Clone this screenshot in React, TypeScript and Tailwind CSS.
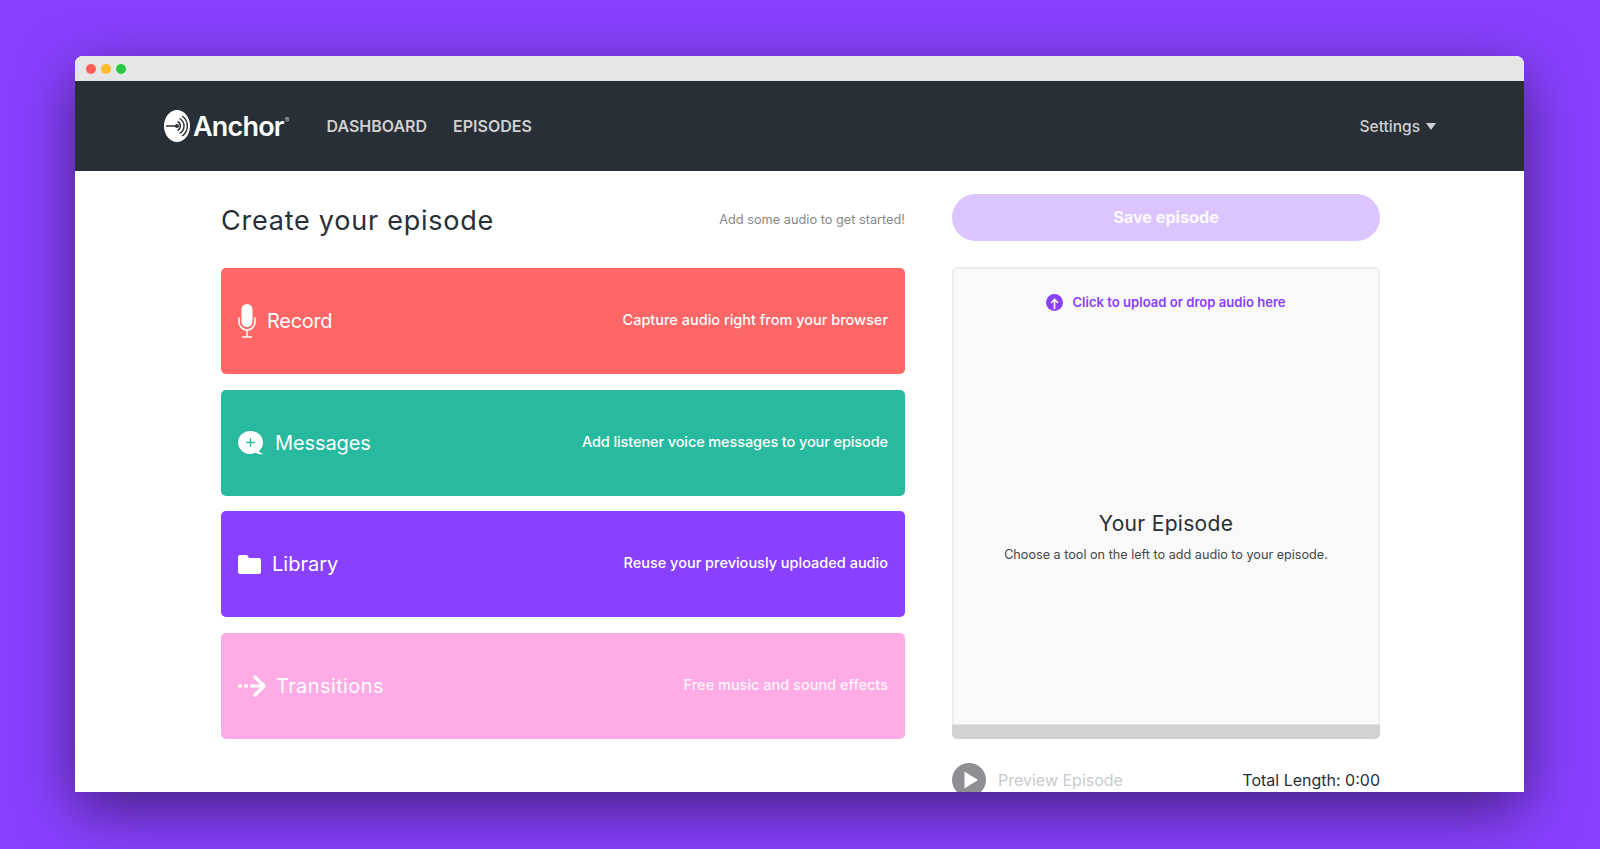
import { ReactNode } from 'react';

const body = "font-['Inter',sans-serif]";

function MicIcon() {
  return (
    <svg width="18" height="34" viewBox="0 0 18 34" fill="none">
      <rect x="3.5" y="0" width="11" height="23" rx="5.5" fill="white" />
      <path d="M1 14v4a8 8 0 0 0 16 0v-4" stroke="white" strokeWidth="1.6" strokeLinecap="round" />
      <path d="M9 26v7M4 33h10" stroke="white" strokeWidth="1.6" />
    </svg>
  );
}

function BubbleIcon() {
  return (
    <svg className="shrink-0" width="26" height="24" viewBox="0 0 26 24">
      <ellipse cx="12.5" cy="11.5" rx="12.5" ry="11.5" fill="white" />
      <path d="M20 19c.8 1.700 2.500 3.300 5.500 4-3.500 .6-6.500 0-8.500-1.500z" fill="white" />
      <path d="M12.500 7.250v8.500M8.250 11.500h8.500" stroke="#27BA9E" strokeWidth="1.300" />
    </svg>
  );
}

function FolderIcon() {
  return (
    <svg width="23" height="19" viewBox="0 0 23 19">
      <path d="M2 0h6c1 0 1.600 .5 2.100 1.300L11 3h10a2 2 0 0 1 2 2V17a2 2 0 0 1-2 2H2a2 2 0 0 1-2-2V2a2 2 0 0 1 2-2z" fill="white" />
    </svg>
  );
}

function ArrowIcon() {
  return (
    <svg width="28" height="22" viewBox="0 0 28 22" fill="none">
      <path d="M0 11h4M6 11h4M12 11h13" stroke="white" strokeWidth="3.200" />
      <path d="M17 2l9 9-9 9" stroke="white" strokeWidth="3.400" strokeLinecap="round" strokeLinejoin="round" />
    </svg>
  );
}

function LogoMark() {
  return (
    <svg width="26" height="32" viewBox="0 0 26 32" fill="none">
      <ellipse cx="13" cy="16" rx="13" ry="16" fill="white" />
      <path d="M2 16h10" stroke="#292F36" strokeWidth="1.500" />
      <circle cx="13" cy="16" r="2" fill="#292F36" />
      <path d="M13.500 11.500a5 5 0 0 1 0 9M15.500 8.500a8.500 8.500 0 0 1 0 15M18 6a12 12 0 0 1 0 20" stroke="#292F36" strokeWidth="1.400" />
    </svg>
  );
}

function ToolCard({ color, icon, label, hint, gap, labelClass, hintClass }: { color: string; icon: ReactNode; label: string; hint: string; gap: string; labelClass?: string; hintClass?: string }) {
  return (
    <div className={`flex h-[106px] items-center justify-between rounded-[5px] pl-[17px] pr-[17px] ${color}`}>
      <div className={`flex items-center ${gap}`}>
        {icon}
        <span className={`text-[20px] text-white ${labelClass ?? ''}`}>{label}</span>
      </div>
      <span className={`pb-[2px] text-[14.500px] font-medium text-white ${hintClass ?? ''}`}>{hint}</span>
    </div>
  );
}

export default function App() {
  return (
    <div className={`h-[849px] overflow-hidden bg-[#8940FF] pl-[75px] pt-[56px] ${body}`}>
      <div className="flex h-[736px] w-[1449px] flex-col overflow-hidden rounded-t-[8px] bg-white shadow-[0_18px_60px_rgba(0,0,0,0.5)]">
        <div className="flex h-[25px] shrink-0 items-center gap-[5px] bg-[#E6E6E6] pl-[11px]">
          <span className="h-[10px] w-[10px] rounded-full bg-[#FF5F57]" />
          <span className="h-[10px] w-[10px] rounded-full bg-[#FFBD2E]" />
          <span className="h-[10px] w-[10px] rounded-full bg-[#28C940]" />
        </div>

        <div className="flex h-[90px] shrink-0 items-center justify-between bg-[#292F36] pl-[89px] pr-[88px]">
          <div className="flex items-center">
            <LogoMark />
            <span className="ml-[3px] text-[27px] font-semibold leading-none tracking-[-0.8px] text-white">Anchor</span>
            <span className="mb-[10px] ml-[1px] text-[7px] text-white/70">®</span>
            <nav className="ml-[37px] flex gap-[26px] text-[16px] font-semibold text-[#CFD0D2]">
              <span>DASHBOARD</span>
              <span>EPISODES</span>
            </nav>
          </div>
          <div className="flex items-center gap-[6px] pt-[2px] text-[15.500px] font-medium text-[#CFD0D2]">
            <span>Settings</span>
            <span className="mb-[2px] h-0 w-0 border-x-[5.500px] border-t-[7px] border-x-transparent border-t-[#CFD0D2]" />
          </div>
        </div>

        <div className="flex gap-[47px] pl-[146px] pt-[23px]">
          <div className="w-[684px]">
            <div className="flex h-[47px] items-center justify-between">
              <h1 className="mt-[7px] text-[27px] tracking-[0.76px] text-[#292F36]">Create your episode</h1>
              <span className="mt-[5px] text-[12.750px] text-[#85888C]">Add some audio to get started!</span>
            </div>
            <div className="mt-[27px] flex flex-col gap-[15.500px]">
              <ToolCard color="bg-[#FF6666]" icon={<MicIcon />} label="Record" hint="Capture audio right from your browser" gap="gap-[11px]" labelClass="tracking-[-0.3px]" />
              <ToolCard color="bg-[#27BA9E]" icon={<BubbleIcon />} label="Messages" hint="Add listener voice messages to your episode" gap="gap-[11px]" labelClass="tracking-[-0.1px]" hintClass="tracking-[-0.1px]" />
              <ToolCard color="bg-[#8940FF]" icon={<FolderIcon />} label="Library" hint="Reuse your previously uploaded audio" gap="gap-[11px]" />
              <ToolCard color="bg-[#FFABE6]" icon={<ArrowIcon />} label="Transitions" hint="Free music and sound effects" gap="gap-[10px]" labelClass="tracking-[0.4px]" hintClass="opacity-90" />
            </div>
          </div>

          <div className="w-[428px]">
            <button className="h-[47px] w-full rounded-full bg-[#DCC5FF] pb-[1px] text-[16.200px] font-bold text-white/90">Save episode</button>
            <div className="mt-[26px] flex h-[472px] flex-col overflow-hidden rounded-[5px] bg-[#F9F9F9]">
              <div className="flex flex-1 flex-col items-center rounded-t-[5px] border-2 border-b-0 border-[#EEEEEE] pt-[24px]">
                <div className="flex items-center gap-[9px] text-[13.100px] font-semibold text-[#8940FF]">
                  <svg width="17" height="17" viewBox="0 0 17 17" fill="none">
                    <circle cx="8.500" cy="8.500" r="8.500" fill="#8940FF" />
                    <path d="M8.500 15V6M5 9l3.500-3.500L12 9" stroke="white" strokeWidth="1.600" />
                  </svg>
                  <span>Click to upload or drop audio here</span>
                </div>
                <h2 className="mt-[197px] text-[21px] leading-[28px] tracking-[0.3px] text-[#292F36]">Your Episode</h2>
                <p className="mt-[8px] text-[12.650px] text-[#44484D]">Choose a tool on the left to add audio to your episode.</p>
              </div>
              <div className="h-[15px] shrink-0 border-t border-[#E2E3E4] bg-[#D1D2D4]" />
            </div>
            <div className="mt-[24px] flex items-center justify-between">
              <div className="flex items-center gap-[12px]">
                <svg width="34" height="34" viewBox="0 0 34 34">
                  <circle cx="17" cy="17" r="17" fill="#8E8F93" />
                  <path d="M12.500 8.500L26 17 12.500 25.500z" fill="white" />
                </svg>
                <span className="text-[16px] text-[#C9CACC]">Preview Episode</span>
              </div>
              <span className="text-[16px] text-[#292F36]">Total Length: 0:00</span>
            </div>
          </div>
        </div>
      </div>
    </div>
  );
}
